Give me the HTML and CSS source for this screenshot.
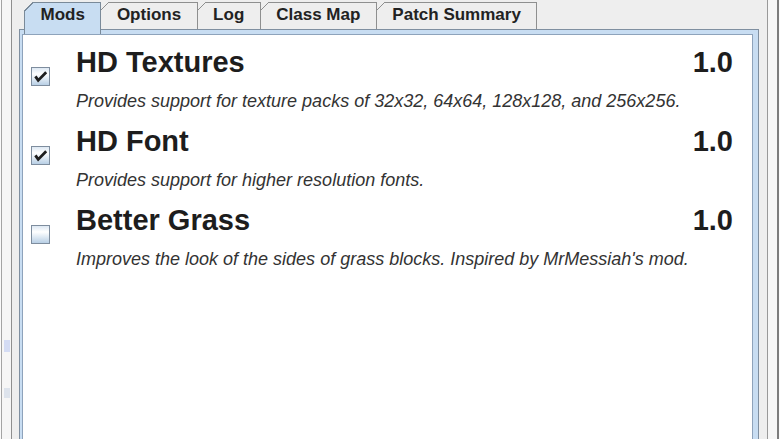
FILE: index.html
```html
<!DOCTYPE html>
<html lang="en">

<head>
    <meta charset="utf-8">
    <title>Mods</title>
    <link rel="stylesheet" href="styles.css">
</head>

<body>
    <div class="window">
        <div class="edge edge-left">
            <span class="blot blot-a"></span>
            <span class="blot blot-b"></span>
        </div>

        <div class="tabbed">
            <ul class="tabs">
                <li class="tab first selected">Mods</li>
                <li class="tab">Options</li>
                <li class="tab">Log</li>
                <li class="tab">Class Map</li>
                <li class="tab">Patch Summary</li>
            </ul>

            <div class="panel">
                <div class="list">
                    <div class="mod">
                        <span class="box checked">
                            <svg width="17" height="17" viewBox="0 0 17 17"><path d="M3.4 8.4 L6.2 12.4 L14.2 4.2" fill="none" stroke="#1e1e1e" stroke-width="2.8" stroke-linejoin="miter"/></svg>
                        </span>
                        <div class="info">
                            <div class="head">
                                <span class="name">HD Textures</span>
                                <span class="version">1.0</span>
                            </div>
                            <p class="desc">Provides support for texture packs of 32x32, 64x64, 128x128, and 256x256.</p>
                        </div>
                    </div>

                    <div class="mod">
                        <span class="box checked">
                            <svg width="17" height="17" viewBox="0 0 17 17"><path d="M3.4 8.4 L6.2 12.4 L14.2 4.2" fill="none" stroke="#1e1e1e" stroke-width="2.8" stroke-linejoin="miter"/></svg>
                        </span>
                        <div class="info">
                            <div class="head">
                                <span class="name">HD Font</span>
                                <span class="version">1.0</span>
                            </div>
                            <p class="desc">Provides support for higher resolution fonts.</p>
                        </div>
                    </div>

                    <div class="mod">
                        <span class="box"></span>
                        <div class="info">
                            <div class="head">
                                <span class="name">Better Grass</span>
                                <span class="version">1.0</span>
                            </div>
                            <p class="desc">Improves the look of the sides of grass blocks. Inspired by MrMessiah's mod.</p>
                        </div>
                    </div>
                </div>
            </div>
        </div>

        <div class="edge edge-right"></div>
    </div>
</body>

</html>
```

FILE: styles.css
```css
html,
body {
    margin: 0;
    height: 100%;
}

body {
    font-family: "Liberation Sans", Arial, sans-serif;
    background-color: #fafafa;
    overflow: hidden;
}

.window {
    display: flex;
    height: 439px;
}

/* window frame strips */
.edge {
    display: flex;
    flex-direction: column;
    width: 9px;
    background-color: #f6f6f6;
}

.edge-left {
    margin-left: 1px;
    border-left: 1px solid #a4a4a4;
    border-right: 1px solid #8f8f8f;
}

.edge-right {
    border-left: 1px solid #999;
    border-right: 2px solid #7c7c7c;
}

.blot {
    margin-left: 2px;
    width: 6px;
    background-color: #d4dcf4;
}

.blot-a {
    margin-top: 340px;
    height: 12px;
}

.blot-b {
    margin-top: 36px;
    height: 10px;
    background-color: #dde3ec;
}

/* tabbed pane */
.tabbed {
    display: flex;
    flex-direction: column;
    width: 755px;
    box-sizing: border-box;
    padding: 0 8px 0 7px;
    background-color: #eeeeee;
}

.tabs {
    display: flex;
    flex: none;
    align-items: flex-start;
    list-style: none;
    margin: 0;
    padding: 2px 0 0 5px;
    height: 29px;
    box-sizing: border-box;
}

.tab {
    position: relative;
    height: 26px;
    line-height: 24px;
    padding: 0 15.5px;
    font-size: 17px;
    font-weight: bold;
    color: #222;
    background-color: #eeeeee;
    border-top: 1px solid #8e8f8f;
    border-right: 1px solid #8e8f8f;
}

.tab::before {
    content: "";
    position: absolute;
    top: -1px;
    left: 0;
    width: 8px;
    height: 8px;
    background: linear-gradient(to bottom right, #eeeeee 0 45%, #8e8f8f 45% 54%, transparent 54%);
}

.tab.first {
    border-left: 1px solid #8e8f8f;
}

.tab.first::before {
    left: -1px;
    width: 10px;
    height: 10px;
}

.tab.selected {
    z-index: 1;
    height: 31px;
    background-color: #c8ddf2;
    border-color: #7a8a99;
}

.tab.selected::before {
    background: linear-gradient(to bottom right, #eeeeee 0 45%, #7a8a99 45% 54%, transparent 54%);
}

.panel {
    display: flex;
    flex: 1;
    padding: 4px 5px 0 2px;
    background-color: #c8ddf2;
    border: 1px solid #7f8fa0;
    border-bottom: none;
}

.list {
    flex: 1;
    padding-top: 10px;
    background-color: #fff;
    border: 1px solid #8ea3bb;
    border-bottom: none;
}

/* mod rows */
.mod {
    display: flex;
    align-items: flex-start;
    padding: 0 19px 0 8px;
    margin-bottom: 12px;
}

.box {
    display: flex;
    align-items: center;
    justify-content: center;
    flex: none;
    width: 17px;
    height: 17px;
    margin-top: 22px;
    border: 1px solid #7e8d9e;
    background: linear-gradient(#dde8f3, #fff 35%, #b8cfe5);
}

.info {
    flex: 1;
    margin-left: 26px;
}

.head {
    display: flex;
    justify-content: space-between;
    font-size: 29px;
    font-weight: bold;
    line-height: 34px;
    color: #1d1d1d;
}

.desc {
    margin: 11px 0 0;
    font-size: 18px;
    font-style: italic;
    line-height: 22px;
    color: #333;
}
```
